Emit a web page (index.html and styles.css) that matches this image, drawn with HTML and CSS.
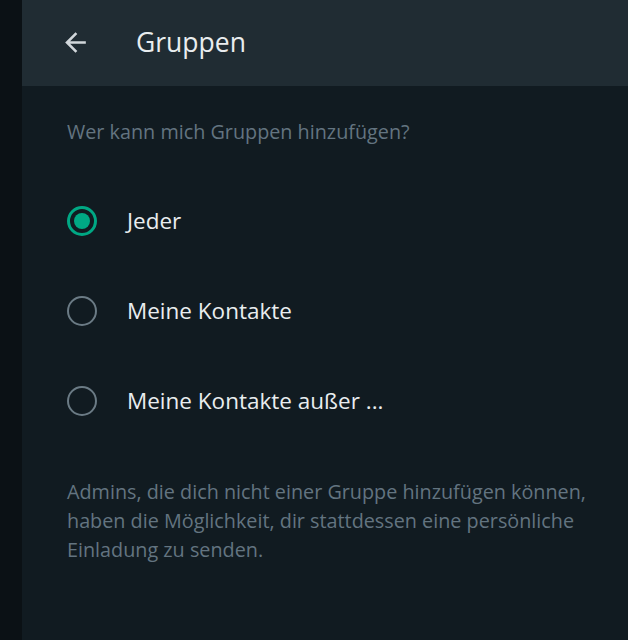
FILE: index.html
```html
<!DOCTYPE html>
<html lang="de">
<head>
<meta charset="utf-8">
<link rel="stylesheet" href="styles.css">
</head>
<body>
<div class="app">
  <div class="strip"></div>
  <div class="panel">
    <header class="header">
      <button class="back" aria-label="Zurück">
        <svg width="24" height="24" viewBox="0 0 24 24"><path d="M12 4l1.41 1.41L7.83 11H20v2H7.83l5.58 5.59L12 20l-8-8z" fill="#d1d7db"/></svg>
      </button>
      <h1 class="title">Gruppen</h1>
    </header>
    <main class="content">
      <p class="label">Wer kann mich Gruppen hinzufügen?</p>
      <ul class="options">
        <li class="option"><span class="radio checked"></span><span class="opt-text">Jeder</span></li>
        <li class="option"><span class="radio"></span><span class="opt-text">Meine Kontakte</span></li>
        <li class="option"><span class="radio"></span><span class="opt-text">Meine Kontakte außer ...</span></li>
      </ul>
      <p class="note">Admins, die dich nicht einer Gruppe hinzufügen können, haben die Möglichkeit, dir stattdessen eine persönliche Einladung zu senden.</p>
    </main>
  </div>
</div>
</body>
</html>
```
FILE: styles.css
```css
* { box-sizing: border-box; }
html, body { margin: 0; padding: 0; height: 100%; }
body {
  background: #111b21;
  font-family: "Open Sans", "Noto Sans", sans-serif;
}
.app { display: flex; height: 640px; }
.strip { width: 22px; background: #0b1115; flex: none; }
.panel { flex: 1; background: #111b21; display: flex; flex-direction: column; }
.header {
  height: 86px;
  background: #202c33;
  display: flex;
  align-items: center;
  padding-left: 41px;
}
.back {
  background: none; border: 0; padding: 0; margin: 0 0 1px;
  width: 24px; height: 24px;
  display: flex; align-items: center; justify-content: center;
}
.back svg { width: 31px; height: 31px; flex: none; }
.title {
  margin: 0 0 3px 49px;
  font-size: 26.5px;
  line-height: 34px;
  font-weight: 400;
  color: #e9edef;
}
.content { padding: 0 0 0 45px; }
.label {
  margin: 32px 0 0;
  font-size: 19.8px;
  line-height: 28px;
  color: #637480;
}
.options { list-style: none; margin: 30px 0 0; padding: 0; }
.option {
  display: flex; align-items: center;
  height: 90px;
}
.radio {
  width: 30px; height: 30px;
  border: 2.5px solid #6b7b85;
  border-radius: 50%;
  display: flex; align-items: center; justify-content: center;
  flex: none;
}
.radio.checked { border: 3px solid #00a884; }
.radio.checked::after {
  content: ""; width: 16px; height: 16px; border-radius: 50%; background: #00a884;
}
.opt-text {
  margin-left: 30px;
  font-size: 22.5px;
  line-height: 30px;
  color: #e9edef;
}
.note {
  margin: 31px 0 0;
  max-width: 540px;
  font-size: 19.8px;
  line-height: 29px;
  color: #637480;
}
```
